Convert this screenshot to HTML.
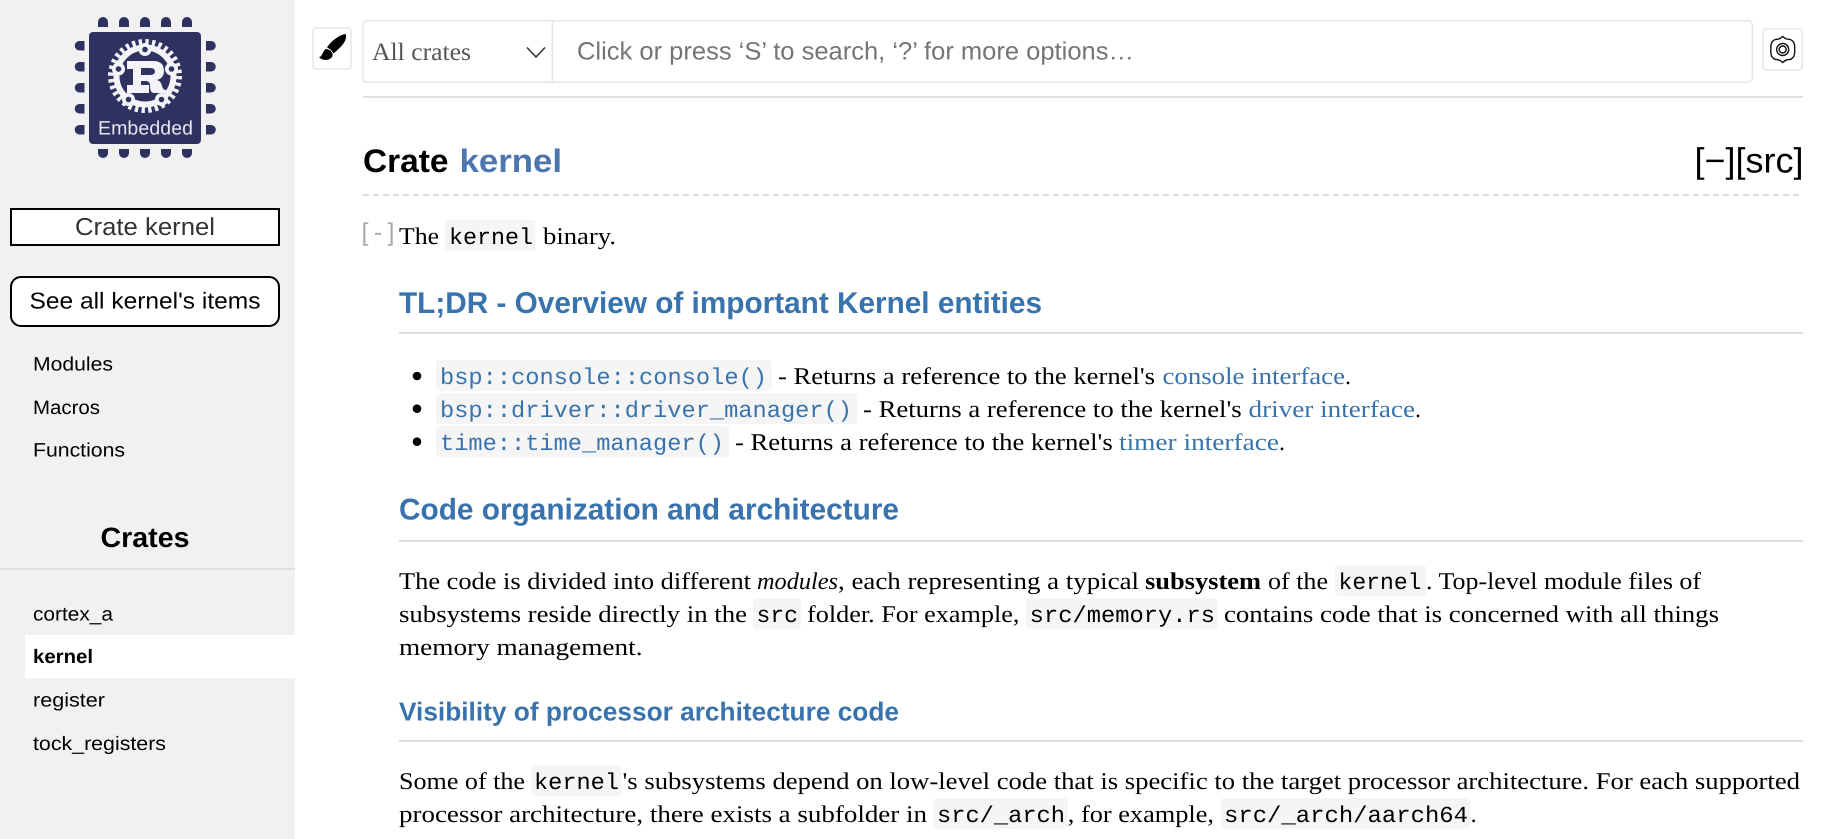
<!DOCTYPE html>
<html lang="en"><head><meta charset="utf-8"><title>kernel - Rust</title>
<style>
html,body{margin:0;padding:0;background:#fff;width:1822px;height:839px;overflow:hidden}
svg{display:block}
text{white-space:pre;text-rendering:geometricPrecision}
.s{font-family:"Liberation Sans",sans-serif}
.f{font-family:"Liberation Serif",serif;font-size:24px;fill:#000}
.m{font-family:"Liberation Mono",monospace;font-size:23px;fill:#000}
.h{font-family:"Liberation Sans",sans-serif;font-weight:700;fill:#3873ad}
.n{font-family:"Liberation Sans",sans-serif;font-size:19.5px;fill:#000}
.l{fill:#3873ad}
</style></head><body>
<svg xmlns="http://www.w3.org/2000/svg" width="1822" height="839" viewBox="0 0 1822 839">
<rect width="1822" height="839" fill="#fff"/>
<rect width="295" height="839" fill="#f1f1f1"/>

<!-- logo -->
<g fill="#2f3161">
<rect x="89" y="32" width="112" height="112" rx="4"/>
<path d="M98 27V22a5 5 0 0 1 10 0v5zM119 27V22a5 5 0 0 1 10 0v5zM140 27V22a5 5 0 0 1 10 0v5zM161 27V22a5 5 0 0 1 10 0v5zM182 27V22a5 5 0 0 1 10 0v5z"/>
<path d="M98 149v4a5 5 0 0 0 10 0v-4zM119 149v4a5 5 0 0 0 10 0v-4zM140 149v4a5 5 0 0 0 10 0v-4zM161 149v4a5 5 0 0 0 10 0v-4zM182 149v4a5 5 0 0 0 10 0v-4z"/>
<path d="M84.500 41v9.500H79.500a4.750 4.750 0 0 1 0-9.500zM84.500 62v9.500H79.500a4.750 4.750 0 0 1 0-9.500zM84.500 83v9.500H79.500a4.750 4.750 0 0 1 0-9.500zM84.500 104v9.500H79.500a4.750 4.750 0 0 1 0-9.500zM84.500 125v9.500H79.500a4.750 4.750 0 0 1 0-9.500z"/>
<path d="M206 41v9.500h5a4.750 4.750 0 0 0 0-9.500zM206 62v9.500h5a4.750 4.750 0 0 0 0-9.500zM206 83v9.500h5a4.750 4.750 0 0 0 0-9.500zM206 104v9.500h5a4.750 4.750 0 0 0 0-9.500zM206 125v9.500h5a4.750 4.750 0 0 0 0-9.500z"/>
</g>
<circle cx="145" cy="76" r="34" fill="none" stroke="#f4f4f8" stroke-width="6" stroke-dasharray="3.340 3.340"/>
<circle cx="145" cy="76" r="28.500" fill="none" stroke="#f4f4f8" stroke-width="6"/>
<g fill="#f4f4f8">
<circle cx="145" cy="49.500" r="6.500"/><circle cx="118.500" cy="69" r="6.500"/><circle cx="171.500" cy="69" r="6.500"/><circle cx="128.500" cy="99.500" r="6.500"/><circle cx="161.500" cy="99.500" r="6.500"/>
<path fill-rule="evenodd" d="M127 61H153Q164 61 164 71Q164 78 157 80Q161 81 162 86Q163 90 166 90V93H153Q150 92 150 86Q150 81 146 81H141V85H149V93H127V85H133V69H127ZM141 68V75H150Q155 75 155 71.500Q155 68 150 68Z"/>
</g>
<g fill="#2f3161"><circle cx="145" cy="49.500" r="2.800"/><circle cx="118.500" cy="69" r="2.800"/><circle cx="171.500" cy="69" r="2.800"/><circle cx="128.500" cy="99.500" r="2.800"/><circle cx="161.500" cy="99.500" r="2.800"/></g>
<text class="s" x="98" y="134.500" font-size="19.500" fill="#e6e6ee" textLength="95" lengthAdjust="spacing">Embedded</text>

<!-- sidebar -->
<rect x="11" y="209" width="268" height="36" fill="#fff" stroke="#000" stroke-width="2"/>
<text class="s" x="75" y="235" font-size="24.500" fill="#333" textLength="140" lengthAdjust="spacingAndGlyphs">Crate kernel</text>
<rect x="11" y="277" width="268" height="49" rx="10" fill="#fff" stroke="#000" stroke-width="2"/>
<text class="s" x="29.500" y="308.500" font-size="23" fill="#000" textLength="231" lengthAdjust="spacingAndGlyphs">See all kernel's items</text>
<text class="n" x="33" y="370.500" textLength="80" lengthAdjust="spacingAndGlyphs">Modules</text>
<text class="n" x="33" y="414" textLength="67" lengthAdjust="spacingAndGlyphs">Macros</text>
<text class="n" x="33" y="456.500" textLength="92" lengthAdjust="spacingAndGlyphs">Functions</text>
<text class="s" x="100.500" y="547" font-size="28" font-weight="700" fill="#000" textLength="89" lengthAdjust="spacingAndGlyphs">Crates</text>
<rect x="0" y="568" width="295" height="2" fill="#ddd"/>
<text class="n" x="33" y="620.500" textLength="80" lengthAdjust="spacingAndGlyphs">cortex_a</text>
<rect x="25" y="635" width="270" height="43" fill="#fff"/>
<text class="n" x="33" y="663" font-weight="700" textLength="60" lengthAdjust="spacingAndGlyphs">kernel</text>
<text class="n" x="33" y="706.500" textLength="72" lengthAdjust="spacingAndGlyphs">register</text>
<text class="n" x="33" y="750" textLength="133" lengthAdjust="spacingAndGlyphs">tock_registers</text>

<!-- top bar -->
<rect x="313" y="28" width="38" height="41" rx="3" fill="#fff" stroke="#e6e6e6" stroke-width="1.500"/>
<path d="M345.500 34C347.500 38 344 44 339 48.500C337 50.500 335 52 333.500 53.500C332 50.500 329.500 48.500 327 47.500C331 41 340 34.500 345.500 34Z" fill="#000"/>
<path d="M325.500 49C330 49 333.500 53 332.500 56C330.500 61 322 61 319 57C322.500 57 322 52 325.500 49Z" fill="#000"/>
<rect x="362.750" y="20.750" width="1389.500" height="61.500" rx="4" fill="#fff" stroke="#e6e6e6" stroke-width="1.500"/>
<rect x="551.500" y="21" width="1.500" height="61" fill="#e6e6e6"/>
<text class="f" x="372" y="60" style="font-size:25px;fill:#555" textLength="99" lengthAdjust="spacingAndGlyphs">All crates</text>
<path d="M527 47.500L536 57L545 47.500" fill="none" stroke="#333" stroke-width="1.600"/>
<text class="s" x="577" y="59.500" font-size="25" fill="#757575" textLength="557" lengthAdjust="spacingAndGlyphs">Click or press ‘S’ to search, ‘?’ for more options…</text>
<rect x="1763" y="29" width="39" height="41" rx="3" fill="#fff" stroke="#e6e6e6" stroke-width="1.500"/>
<g fill="none" stroke="#111" stroke-width="1.400">
<path d="M1782.700 36.500Q1786 39.500 1789 39.300Q1792 39.500 1794 43Q1795 46.500 1794.600 49.500Q1795 52.500 1794 56Q1792 59.500 1789 59.500Q1786 59.500 1782.700 62.500Q1779.500 59.500 1776.500 59.500Q1773.500 59.500 1771.500 56Q1770.500 52.500 1770.900 49.500Q1770.500 46.500 1771.500 43Q1773.500 39.500 1776.500 39.300Q1779.500 39.500 1782.700 36.500Z"/>
<circle cx="1782.700" cy="49.500" r="6"/><circle cx="1782.700" cy="49.500" r="3.500"/>
</g>
<rect x="363" y="96" width="1440" height="2" fill="#e0e0e0"/>

<!-- title -->
<text class="s" x="363" y="172" font-size="32.500" font-weight="700" fill="#000" textLength="85.500" lengthAdjust="spacingAndGlyphs">Crate</text>
<text class="s" x="459.500" y="172" font-size="32.500" font-weight="700" fill="#4d76ae" textLength="102.500" lengthAdjust="spacingAndGlyphs">kernel</text>
<text class="s" x="1694.500" y="172.500" font-size="35" fill="#000" textLength="109" lengthAdjust="spacingAndGlyphs">[−][src]</text>
<line x1="363" y1="195" x2="1803" y2="195" stroke="#ddd" stroke-width="2" stroke-dasharray="6 4"/>

<!-- intro -->
<text class="s" x="361.500" y="240.500" font-size="25" fill="#aaa" textLength="33" lengthAdjust="spacing">[-]</text>
<text class="f" x="399" y="244" textLength="40" lengthAdjust="spacingAndGlyphs">The</text>
<rect x="445" y="220" width="90.500" height="31" rx="3" fill="#f5f5f5"/>
<text class="m" x="449" y="244" textLength="84" lengthAdjust="spacingAndGlyphs">kernel</text>
<text class="f" x="543" y="244" textLength="73" lengthAdjust="spacingAndGlyphs">binary.</text>

<text class="h" x="399" y="313" font-size="30" textLength="643" lengthAdjust="spacingAndGlyphs">TL;DR - Overview of important Kernel entities</text>
<rect x="399" y="332" width="1404" height="2" fill="#ddd"/>

<!-- list -->
<circle cx="417" cy="376" r="4.300" fill="#000"/><circle cx="417" cy="408.700" r="4.300" fill="#000"/><circle cx="417" cy="441.700" r="4.300" fill="#000"/>
<rect x="436" y="360" width="335.700" height="31" rx="3" fill="#f5f5f5"/>
<rect x="436" y="393" width="421.500" height="31" rx="3" fill="#f5f5f5"/>
<rect x="436" y="426" width="293" height="31" rx="3" fill="#f5f5f5"/>
<text class="m l" x="440" y="384" textLength="327" lengthAdjust="spacingAndGlyphs">bsp::console::console()</text>
<text class="m l" x="440" y="417" textLength="412" lengthAdjust="spacingAndGlyphs">bsp::driver::driver_manager()</text>
<text class="m l" x="440" y="450" textLength="284" lengthAdjust="spacingAndGlyphs">time::time_manager()</text>
<text class="f" x="778" y="384" textLength="377" lengthAdjust="spacingAndGlyphs">- Returns a reference to the kernel's</text>
<text class="f l" x="1162.500" y="384" style="fill:#3873ad" textLength="182.500" lengthAdjust="spacingAndGlyphs">console interface</text>
<text class="f" x="1345" y="384" textLength="6" lengthAdjust="spacingAndGlyphs">.</text>
<text class="f" x="863" y="417" textLength="378.700" lengthAdjust="spacingAndGlyphs">- Returns a reference to the kernel's</text>
<text class="f l" x="1248.500" y="417" style="fill:#3873ad" textLength="166.500" lengthAdjust="spacingAndGlyphs">driver interface</text>
<text class="f" x="1415" y="417" textLength="6" lengthAdjust="spacingAndGlyphs">.</text>
<text class="f" x="735" y="450" textLength="377.700" lengthAdjust="spacingAndGlyphs">- Returns a reference to the kernel's</text>
<text class="f l" x="1119" y="450" style="fill:#3873ad" textLength="160" lengthAdjust="spacingAndGlyphs">timer interface</text>
<text class="f" x="1279" y="450" textLength="6" lengthAdjust="spacingAndGlyphs">.</text>

<!-- code organization -->
<text class="h" x="399" y="519.500" font-size="30" textLength="500" lengthAdjust="spacingAndGlyphs">Code organization and architecture</text>
<rect x="399" y="540" width="1404" height="2" fill="#ddd"/>

<text class="f" x="399" y="589" textLength="352" lengthAdjust="spacingAndGlyphs">The code is divided into different</text>
<text class="f" x="757" y="589" font-style="italic" textLength="81" lengthAdjust="spacingAndGlyphs">modules</text>
<text class="f" x="838" y="589" textLength="301" lengthAdjust="spacingAndGlyphs">, each representing a typical</text>
<text class="f" x="1145" y="589" font-weight="700" textLength="116" lengthAdjust="spacingAndGlyphs">subsystem</text>
<text class="f" x="1268" y="589" textLength="60" lengthAdjust="spacingAndGlyphs">of the</text>
<rect x="1335" y="565" width="91" height="31" rx="3" fill="#f5f5f5"/>
<text class="m" x="1338.500" y="589" textLength="83" lengthAdjust="spacingAndGlyphs">kernel</text>
<text class="f" x="1426" y="589" textLength="275" lengthAdjust="spacingAndGlyphs">. Top-level module files of</text>

<text class="f" x="399" y="622" textLength="348" lengthAdjust="spacingAndGlyphs">subsystems reside directly in the</text>
<rect x="753" y="598" width="48" height="31" rx="3" fill="#f5f5f5"/>
<text class="m" x="756.500" y="622" textLength="41.500" lengthAdjust="spacingAndGlyphs">src</text>
<text class="f" x="807" y="622" textLength="212.500" lengthAdjust="spacingAndGlyphs">folder. For example,</text>
<rect x="1026" y="598" width="191.500" height="31" rx="3" fill="#f5f5f5"/>
<text class="m" x="1029.700" y="622" textLength="185.300" lengthAdjust="spacingAndGlyphs">src/memory.rs</text>
<text class="f" x="1224" y="622" textLength="495" lengthAdjust="spacingAndGlyphs">contains code that is concerned with all things</text>

<text class="f" x="399" y="655" textLength="243.500" lengthAdjust="spacingAndGlyphs">memory management.</text>

<!-- visibility -->
<text class="h" x="399" y="720.500" font-size="26" textLength="500" lengthAdjust="spacingAndGlyphs">Visibility of processor architecture code</text>
<rect x="399" y="740" width="1404" height="2" fill="#ddd"/>

<text class="f" x="399" y="789" textLength="126" lengthAdjust="spacingAndGlyphs">Some of the</text>
<rect x="531.500" y="765" width="90" height="31" rx="3" fill="#f5f5f5"/>
<text class="m" x="534" y="789" textLength="85" lengthAdjust="spacingAndGlyphs">kernel</text>
<text class="f" x="622.500" y="789" textLength="1177.500" lengthAdjust="spacingAndGlyphs">'s subsystems depend on low-level code that is specific to the target processor architecture. For each supported</text>

<text class="f" x="399" y="822" textLength="528" lengthAdjust="spacingAndGlyphs">processor architecture, there exists a subfolder in</text>
<rect x="933.700" y="798" width="134" height="31" rx="3" fill="#f5f5f5"/>
<text class="m" x="937" y="822" textLength="128" lengthAdjust="spacingAndGlyphs">src/_arch</text>
<text class="f" x="1067.800" y="822" textLength="146.200" lengthAdjust="spacingAndGlyphs">, for example,</text>
<rect x="1221" y="798" width="249.600" height="31" rx="3" fill="#f5f5f5"/>
<text class="m" x="1224" y="822" textLength="244" lengthAdjust="spacingAndGlyphs">src/_arch/aarch64</text>
<text class="f" x="1470.600" y="822" textLength="6" lengthAdjust="spacingAndGlyphs">.</text>
</svg>
</body></html>
